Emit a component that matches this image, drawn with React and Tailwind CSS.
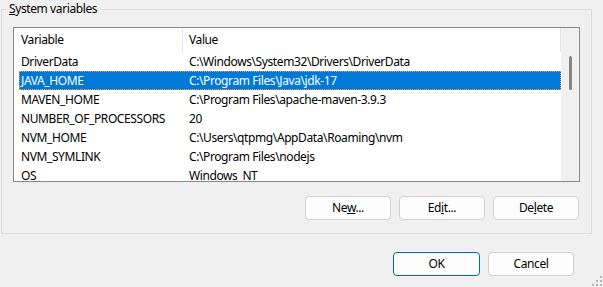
import React from "react";

const rows = [
  ["DriverData", "C:\\Windows\\System32\\Drivers\\DriverData"],
  ["JAVA_HOME", "C:\\Program Files\\Java\\jdk-17"],
  ["MAVEN_HOME", "C:\\Program Files\\apache-maven-3.9.3"],
  ["NUMBER_OF_PROCESSORS", "20"],
  ["NVM_HOME", "C:\\Users\\qtpmg\\AppData\\Roaming\\nvm"],
  ["NVM_SYMLINK", "C:\\Program Files\\nodejs"],
  ["OS", "Windows_NT"],
];

function Btn({ children, primary }) {
  return (
    <button
      className={
        primary
          ? "h-[24px] w-[87px] rounded-[4px] border border-[#0067c0] bg-[#fdfdfd] text-black"
          : "h-[24px] w-[86px] rounded-[4px] border border-[#d0d0d0] bg-[#fdfdfd] text-black"
      }
    >
      {children}
    </button>
  );
}

function Grip() {
  const dots = [
    [8, 0],
    [4, 4],
    [8, 4],
    [0, 8],
    [4, 8],
    [8, 8],
  ];
  return (
    <svg width="10" height="10" className="absolute right-[1px] bottom-[1px]">
      {dots.map(([x, y], i) => (
        <rect key={i} x={x} y={y} width="2" height="2" fill="#b4b4b4" />
      ))}
    </svg>
  );
}

export default function App() {
  return (
    <div
      className="relative w-[603px] h-[287px] overflow-hidden bg-[#f0f0f0] text-[12px] tracking-[-0.4px] text-black"
      style={{ fontFamily: '"Noto Sans", "Open Sans", sans-serif' }}
    >
      <fieldset className="ml-[1px] mt-[1px] w-[591px] border border-[#dcdcdc] pb-[13px]">
        <legend className="ml-[4px] px-[3px] leading-[16px]">
          <span className="underline">S</span>ystem variables
        </legend>
        <div className="ml-[11px] mt-[10px] w-[567px] h-[155px] border border-[#828790] bg-white flex overflow-hidden">
          <div className="flex-1 flex flex-col">
            <div className="h-[24px] flex shrink-0">
              <div className="w-[169px] pl-[7px] flex items-center border-r border-[#e5e5e5]">
                Variable
              </div>
              <div className="flex-1 pl-[6px] flex items-center border-r border-[#e5e5e5]">
                Value
              </div>
            </div>
            {rows.map(([name, value], i) => {
              const sel = i === 1;
              return (
                <div key={name} className="h-[19px] flex shrink-0 pl-[5px]">
                  <div
                    className={
                      sel
                        ? "flex-1 flex items-center bg-[#0078d7] text-white outline outline-1 outline-dotted outline-[#ff9a3c] -outline-offset-1"
                        : "flex-1 flex items-center"
                    }
                  >
                    <div className="w-[164px] pl-[2px] whitespace-nowrap">{name}</div>
                    <div className="flex-1 pl-[6px] whitespace-nowrap">{value}</div>
                  </div>
                </div>
              );
            })}
          </div>
          <div className="w-[18px] bg-[#f0f0f0] flex justify-center shrink-0">
            <div className="mt-[28px] w-[3px] h-[34px] rounded-full bg-[#858585]" />
          </div>
        </div>
        <div className="mt-[14px] mr-[12px] flex justify-end gap-[8px]">
          <Btn>
            Ne<span className="underline">w</span>...
          </Btn>
          <Btn>
            Ed<span className="underline">i</span>t...
          </Btn>
          <Btn>
            De<span className="underline">l</span>ete
          </Btn>
        </div>
      </fieldset>
      <div className="mt-[18px] mr-[29px] flex justify-end gap-[8px]">
        <Btn primary>OK</Btn>
        <Btn>Cancel</Btn>
      </div>
      <Grip />
    </div>
  );
}
